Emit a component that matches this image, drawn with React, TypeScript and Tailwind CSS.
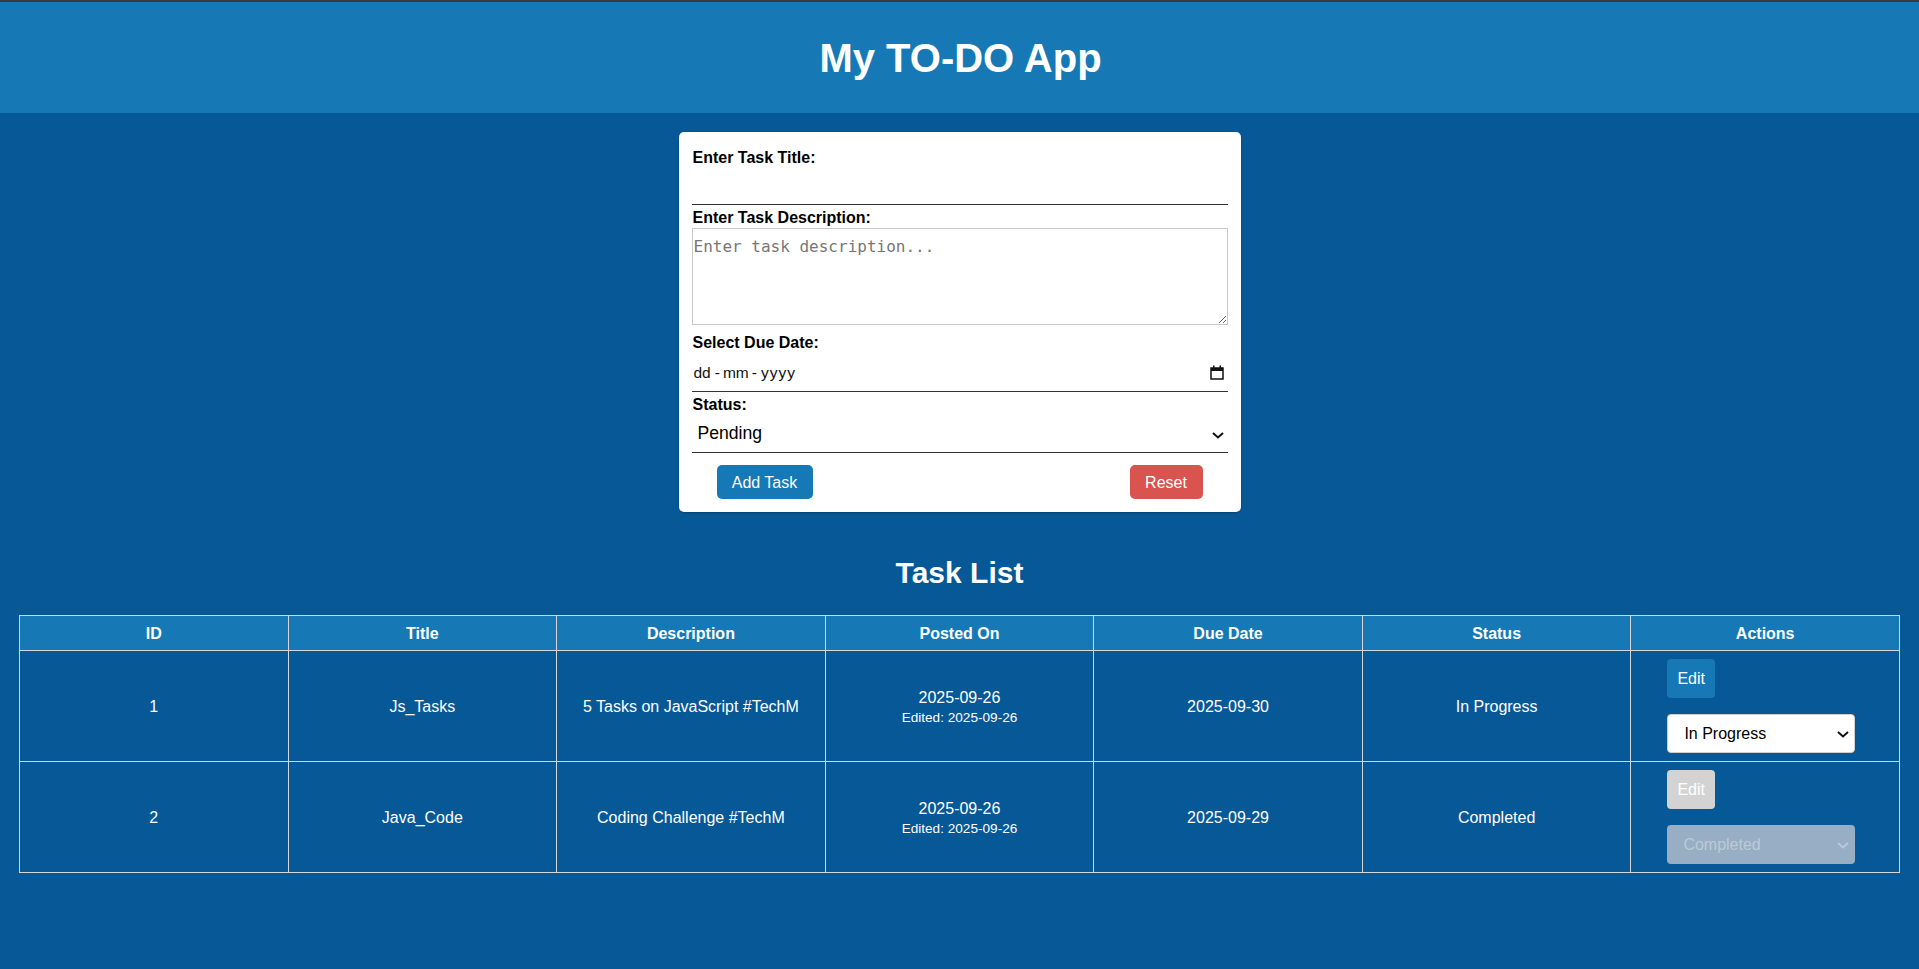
import { ChangeEvent, useState } from 'react';

type Status = 'Pending' | 'In Progress' | 'Completed';

interface Task {
  id: number;
  title: string;
  description: string;
  postedOn: string;
  editedOn?: string;
  dueDate: string;
  status: Status;
}

const TASKS: Task[] = [
  { id: 1, title: 'Js_Tasks', description: '5 Tasks on JavaScript #TechM', postedOn: '2025-09-26', editedOn: '2025-09-26', dueDate: '2025-09-30', status: 'In Progress' },
  { id: 2, title: 'Java_Code', description: 'Coding Challenge #TechM', postedOn: '2025-09-26', editedOn: '2025-09-26', dueDate: '2025-09-29', status: 'Completed' },
];

const COLUMNS = ['ID', 'Title', 'Description', 'Posted On', 'Due Date', 'Status', 'Actions'];

function Chevron({ className }: { className?: string }) {
  return (
    <svg width="12" height="7" viewBox="0 0 12 7" className={className} fill="none">
      <polyline points="1,1 6,5.5 11,1" stroke="currentColor" strokeWidth="2" />
    </svg>
  );
}

function CalendarIcon() {
  return (
    <svg width="14" height="15" viewBox="0 0 14 15" fill="none">
      <rect x="1" y="3" width="12" height="11" stroke="#111" strokeWidth="1.5" />
      <rect x="1" y="3" width="12" height="3" fill="#111" />
      <rect x="3" y="0.5" width="1.5" height="3" fill="#111" />
      <rect x="9.5" y="0.5" width="1.5" height="3" fill="#111" />
    </svg>
  );
}

export default function App() {
  const [tasks, setTasks] = useState<Task[]>(TASKS);

  const changeStatus = (id: number) => (e: ChangeEvent<HTMLSelectElement>) => {
    const status = e.target.value as Status;
    setTasks(prev => prev.map(t => (t.id === id ? { ...t, status } : t)));
  };

  const cell = 'border border-[#d6d6d6] pt-[2px] text-center align-middle';

  return (
    <div className="min-h-screen bg-[#075896] font-['Liberation_Sans',Arial,sans-serif]">
      <header className="h-[113px] border-t-2 border-[#3b3b3b] bg-[#1679b5] flex items-center justify-center">
        <h1 className="pl-[2px] text-[40px] font-bold text-white leading-[46px]">My TO-DO App</h1>
      </header>

      {/* Form */}
      <form
        onSubmit={e => e.preventDefault()}
        className="mx-auto mt-[19px] w-[562px] rounded-[5px] bg-white px-[13px] pt-[17px] pb-[13px] shadow-[0_1px_2px_rgba(0,0,0,0.25)]"
      >
        <label className="block pl-[1px] text-base font-bold leading-[18px] text-black">Enter Task Title:</label>
        <input
          type="text"
          className="block h-[38px] w-full border-b border-[#333] px-[2px] text-base outline-none"
        />

        <label className="mt-[4px] block pl-[1px] text-base font-bold leading-[18px] text-black">Enter Task Description:</label>
        <textarea
          placeholder="Enter task description..."
          className="mt-[1px] block h-[97px] w-full border border-[#c8c8c8] px-[1px] pt-[9px] font-['DejaVu_Sans_Mono',monospace] text-[16px] leading-[18px] outline-none placeholder:text-[#767676]"
        />

        <label className="mt-[9px] block pl-[1px] text-base font-bold leading-[18px] text-black">Select Due Date:</label>
        <div className="flex h-[40px] items-center justify-between border-b border-[#333] pl-[2px] pr-[4px] pt-[2px] text-[15.5px] text-[#111]">
          <div className="flex items-center">
            <span>dd</span>
            <span className="ml-[4px]">-</span>
            <span className="ml-[3px]">mm</span>
            <span className="ml-[3px]">-</span>
            <span className="ml-[4px] tracking-[1px]">yyyy</span>
          </div>
          <CalendarIcon />
        </div>

        <label className="mt-[4px] block pl-[1px] text-base font-bold leading-[18px] text-black">Status:</label>
        <div className="relative flex h-[39px] items-center border-b border-[#333]">
          <select
            defaultValue="Pending"
            className="h-full w-full appearance-none bg-transparent pl-[6px] pt-[1px] text-[17.6px] text-black outline-none"
          >
            <option>Pending</option>
            <option>In Progress</option>
            <option>Completed</option>
          </select>
          <Chevron className="pointer-events-none absolute right-[4px] top-[18px] text-[#111]" />
        </div>

        <div className="mt-[12px] flex justify-between px-[25px]">
          <button type="submit" className="h-[34px] w-[96px] rounded-[5px] bg-[#1679b5] pt-[1px] text-base text-white">
            Add Task
          </button>
          <button type="reset" className="h-[34px] w-[73px] rounded-[5px] bg-[#d9534f] pt-[1px] text-base text-white">
            Reset
          </button>
        </div>
      </form>

      {/* Task list */}
      <h2 className="mt-[44px] mb-[25px] text-center text-[30px] font-bold leading-[34px] text-white">Task List</h2>

      <div className="mx-[19px]">
        <table className="w-full table-fixed border-collapse text-base text-white">
          <thead>
            <tr className="bg-[#1679b5]">
              {COLUMNS.map(c => (
                <th key={c} className="border border-[#d6d6d6] pt-[9px] pb-[7px] font-bold leading-[18px]">
                  {c}
                </th>
              ))}
            </tr>
          </thead>
          <tbody>
            {tasks.map(t => {
              const done = t.status === 'Completed';
              return (
                <tr key={t.id}>
                  <td className={cell}>{t.id}</td>
                  <td className={cell}>{t.title}</td>
                  <td className={cell}>{t.description}</td>
                  <td className={`${cell} leading-[19px]`}>
                    {t.postedOn}
                    <br />
                    <small className="text-[13.6px]">Edited: {t.editedOn}</small>
                  </td>
                  <td className={cell}>{t.dueDate}</td>
                  <td className={cell}>{t.status}</td>
                  <td className="border border-[#d6d6d6] pl-[36px] pt-2 pb-2 align-middle">
                    <div className="flex flex-col items-start gap-[16px]">
                      <button
                        disabled={done}
                        className={
                          done
                            ? 'h-[39px] rounded-[4px] bg-[#d3d3d3] px-[10px] pt-[1px] text-base text-white'
                            : 'h-[39px] rounded-[4px] bg-[#1679b5] px-[10px] pt-[1px] text-base text-white'
                        }
                      >
                        Edit
                      </button>
                      <div className="relative w-[188px]">
                        <select
                          value={t.status}
                          disabled={done}
                          onChange={changeStatus(t.id)}
                          className={
                            done
                              ? 'block h-[39px] w-full appearance-none rounded-[4px] bg-[#98aec4] pl-[16px] pt-[1px] text-base text-[#bccad8] outline-none'
                              : 'block h-[39px] w-full appearance-none rounded-[4px] border border-[#cfcfcf] bg-white pl-[16px] pt-[1px] text-base text-black outline-none'
                          }
                        >
                          <option>Pending</option>
                          <option>In Progress</option>
                          <option>Completed</option>
                        </select>
                        <Chevron
                          className={
                            done
                              ? 'pointer-events-none absolute right-[6px] top-[17px] text-[#bccad8]'
                              : 'pointer-events-none absolute right-[6px] top-[17px] text-[#111]'
                          }
                        />
                      </div>
                    </div>
                  </td>
                </tr>
              );
            })}
          </tbody>
        </table>
      </div>
    </div>
  );
}
